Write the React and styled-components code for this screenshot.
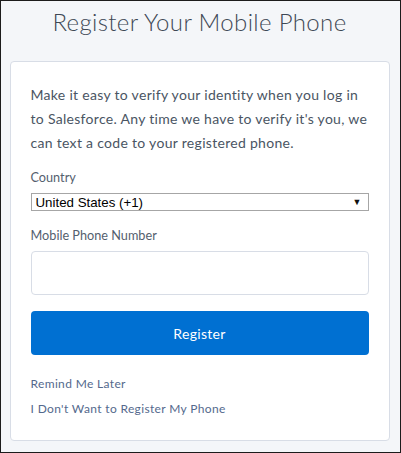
import React from "react";
import styled, { createGlobalStyle } from "styled-components";

const Global = createGlobalStyle`
  html, body { margin: 0; padding: 0; }
  body { font-family: "Lato", "Open Sans", sans-serif; }
  * { box-sizing: border-box; }
`;

const Frame = styled.div`
  width: 401px;
  height: 453px;
  border: 1px solid #1c1c1c;
  background: #f4f6f9;
  display: flex;
  flex-direction: column;
  align-items: center;
  padding: 0 11px 11px 9px;
`;

const Title = styled.h1`
  margin: 0;
  height: 60px;
  padding-top: 6px;
  line-height: 30px;
  text-align: center;
  font-family: "Lato", sans-serif;
  font-weight: 300;
  font-size: 24px;
  color: #3e4855;
  letter-spacing: 0.35px;
`;

const Card = styled.div`
  width: 380px;
  flex: 1;
  background: #fff;
  border: 1px solid #d8dde6;
  border-radius: 4px;
  padding: 21px 20px 0 20px;
  display: flex;
  flex-direction: column;
`;

const Intro = styled.p`
  margin: 0 0 14px 0;
  font-size: 14px;
  line-height: 24px;
  letter-spacing: 0.3px;
  color: #4a5563;
`;

const Label = styled.label`
  display: block;
  font-size: 12.7px;
  line-height: 16px;
  color: #54606e;
  margin-bottom: ${(p) => p.$mb || 6}px;
`;

const Select = styled.div`
  height: 18px;
  margin-top: ${(p) => p.$mt || 0}px;
  border: 1px solid #a6a6a6;
  display: flex;
  align-items: center;
  justify-content: space-between;
  padding: 0 6px 0 4px;
  font-family: "Liberation Sans", Arial, sans-serif;
  font-size: 13.3px;
  color: #000;
  margin-bottom: 16px;
`;

const Arrow = styled.span`
  font-size: 9px;
  color: #111;
`;

const Input = styled.input`
  display: block;
  width: 100%;
  height: 44px;
  border: 1px solid #d8dde6;
  border-radius: 4px;
  margin-bottom: 16px;
  outline: none;
`;

const Button = styled.button`
  width: 100%;
  height: 44px;
  border: none;
  border-radius: 4px;
  background: #0070d2;
  color: #fff;
  font-family: "Lato", sans-serif;
  font-size: 14px;
  letter-spacing: 0.3px;
  margin-bottom: 21px;
`;

const Link = styled.a`
  display: block;
  font-size: 12px;
  line-height: 16px;
  letter-spacing: 0.35px;
  color: #54698d;
  margin-bottom: ${(p) => p.$mb || 9}px;
  text-decoration: none;
`;

export default function App() {
  return (
    <>
      <Global />
      <Frame>
        <Title>Register Your Mobile Phone</Title>
        <Card>
          <Intro>
            Make it easy to verify your identity when you log in to Salesforce. Any time we have to verify it's you, we
            can text a code to your registered phone.
          </Intro>
          <Label $mb={8}>Country</Label>
          <Select>
            <span>United States (+1)</span>
            <Arrow>▼</Arrow>
          </Select>
          <Label $mb={8}>Mobile Phone Number</Label>
          <Input type="text" />
          <Button>Register</Button>
          <Link href="#">Remind Me Later</Link>
          <Link href="#">I Don't Want to Register My Phone</Link>
        </Card>
      </Frame>
    </>
  );
}
